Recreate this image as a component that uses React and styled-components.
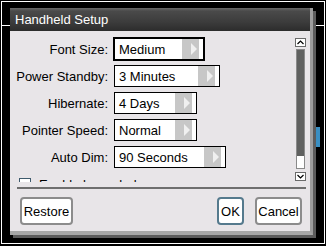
import React from 'react';
import styled, { createGlobalStyle } from 'styled-components';

const Global = createGlobalStyle`
  html, body { margin: 0; padding: 0; background: #000; }
  body { font-family: "Liberation Sans", Arial, sans-serif; }
  * { box-sizing: border-box; }
`;

const Screen = styled.div`
  position: relative;
  width: 326px;
  height: 246px;
  background: #000;
  padding: 1px 1px 2px 1px;
  overflow: hidden;
`;

const Frame = styled.div`
  height: 100%;
  border: 1px solid #fff;
  padding: 6px 0 0 8px;
`;

const Tick = styled.div`
  position: absolute;
  top: 25px;
  ${p => (p.$side === 'left' ? 'left: 2px;' : 'right: 2px;')}
  width: 8px;
  height: 1px;
  background: #fff;
`;

const BlueMark = styled.div`
  position: absolute;
  left: 316px;
  top: 127px;
  width: 4px;
  height: 20px;
  background: #3a8fc2;
`;

const Dialog = styled.div`
  width: 303px;
  display: flex;
  flex-direction: column;
  border-right: 3px solid #9d9d9d;
  border-bottom: 4px solid #a7a7a7;
  box-shadow: 3px 3px 0 #5c5c5c;
`;

const TitleBar = styled.div`
  height: 23px;
  display: flex;
  align-items: center;
  padding-left: 5px;
  color: #fff;
  font-size: 13px;
  background: linear-gradient(#6a6a6a 0px, #4a4a4a 3px, #3c3c3c 14px, #2c2c2c 23px);
`;

const Body = styled.div`
  height: 200px;
  background: #e8e5e8;
  display: flex;
  flex-direction: column;
  padding-top: 6px;
`;

const ContentArea = styled.div`
  display: flex;
  height: 145px;
  padding-right: 4px;
`;

const Rows = styled.div`
  flex: 1;
  overflow: hidden;
  display: grid;
  grid-template-columns: 98px auto;
  grid-auto-rows: 22px;
  column-gap: 6px;
  row-gap: 5px;
  align-content: start;
  justify-items: start;
  padding-top: 1px;
`;

const Label = styled.div`
  justify-self: end;
  align-self: center;
  font-size: 13px;
  color: #000;
  white-space: nowrap;
`;

const Select = styled.div`
  width: ${p => p.$w}px;
  height: 22px;
  border: 1px solid #000;
  background: #fff;
  display: flex;
  align-items: stretch;
  box-shadow: ${p => (p.$focused ? '0 0 0 1px #000' : 'none')};
`;

const Value = styled.span`
  flex: 1;
  padding-left: 4px;
  display: flex;
  align-items: center;
  font-size: 13px;
  color: #000;
  white-space: nowrap;
`;

const Arrow = styled.span`
  width: 17px;
  margin-right: 4px;
  background: #c7c7c7;
  display: flex;
  align-items: center;
  padding-left: 9px;
`;

const CheckRow = styled.div`
  grid-column: 1 / -1;
  display: flex;
  align-items: center;
  gap: 8px;
  padding-left: 9px;
  font-size: 13px;
  color: #000;
`;

const CheckBox = styled.span`
  width: 12px;
  height: 12px;
  border: 1px solid #3e5a6c;
  background: #fff;
`;

const Scrollbar = styled.div`
  width: 11px;
  display: flex;
  flex-direction: column;
  padding-top: 1px;
`;

const ScrollButton = styled.div`
  height: 9px;
  margin-top: ${p => p.$mt || 0}px;
  border: 1px solid #6a6a6a;
  background: #fff;
  display: flex;
  align-items: center;
  justify-content: center;
`;

const Track = styled.div`
  height: 120px;
  margin: 2px 1px 0;
  border: 1px solid #8a8a8a;
  background: #fff;
  display: flex;
  flex-direction: column;
`;

const Thumb = styled.div`
  height: 106px;
  background: #5f605f;
`;

const Separator = styled.div`
  height: 2px;
  margin: 5px 4px 0 7px;
  background: #6e6e6e;
`;

const ButtonRow = styled.div`
  display: flex;
  align-items: center;
  gap: 11px;
  margin-top: 8px;
  padding: 0 8px 0 10px;
`;

const Button = styled.button`
  width: ${p => p.$w}px;
  height: 28px;
  padding: 0;
  margin-right: ${p => (p.$push ? 'auto' : '0')};
  border: 2px solid ${p => (p.$default ? '#557a8d' : '#8c8c8c')};
  border-radius: 4px;
  background: #fff;
  font-family: "Liberation Sans", Arial, sans-serif;
  font-size: 13px;
  color: #000;
  text-align: center;
`;

const Tri = () => (
  <svg width="6" height="12" viewBox="0 0 6 12">
    <polygon points="0,0 6,6 0,12" fill="#f0f0f0" />
  </svg>
);

const rows = [
  { label: 'Font Size:', value: 'Medium', w: 90, focused: true },
  { label: 'Power Standby:', value: '3 Minutes', w: 106 },
  { label: 'Hibernate:', value: '4 Days', w: 83 },
  { label: 'Pointer Speed:', value: 'Normal', w: 83 },
  { label: 'Auto Dim:', value: '90 Seconds', w: 112 },
];

export default function App() {
  return (
    <>
      <Global />
      <Screen>
        <Tick $side="left" />
        <Tick $side="right" />
        <BlueMark />
        <Frame>
          <Dialog>
            <TitleBar>Handheld Setup</TitleBar>
            <Body>
              <ContentArea>
                <Rows>
                  {rows.map(r => (
                    <React.Fragment key={r.label}>
                      <Label>{r.label}</Label>
                      <Select $w={r.w} $focused={r.focused}>
                        <Value>{r.value}</Value>
                        <Arrow><Tri /></Arrow>
                      </Select>
                    </React.Fragment>
                  ))}
                  <CheckRow>
                    <CheckBox />
                    <span>Enable hover help</span>
                  </CheckRow>
                </Rows>
                <Scrollbar>
                  <ScrollButton>
                    <svg width="7" height="5" viewBox="0 0 7 5">
                      <polyline points="0.5,4 3.5,1 6.5,4" fill="none" stroke="#000" strokeWidth="1.2" />
                    </svg>
                  </ScrollButton>
                  <Track>
                    <Thumb />
                  </Track>
                  <ScrollButton $mt={3}>
                    <svg width="7" height="5" viewBox="0 0 7 5">
                      <polyline points="0.5,1 3.5,4 6.5,1" fill="none" stroke="#000" strokeWidth="1.2" />
                    </svg>
                  </ScrollButton>
                </Scrollbar>
              </ContentArea>
              <Separator />
              <ButtonRow>
                <Button $w={53} $push>Restore</Button>
                <Button $w={27} $default>OK</Button>
                <Button $w={47}>Cancel</Button>
              </ButtonRow>
            </Body>
          </Dialog>
        </Frame>
      </Screen>
    </>
  );
}
